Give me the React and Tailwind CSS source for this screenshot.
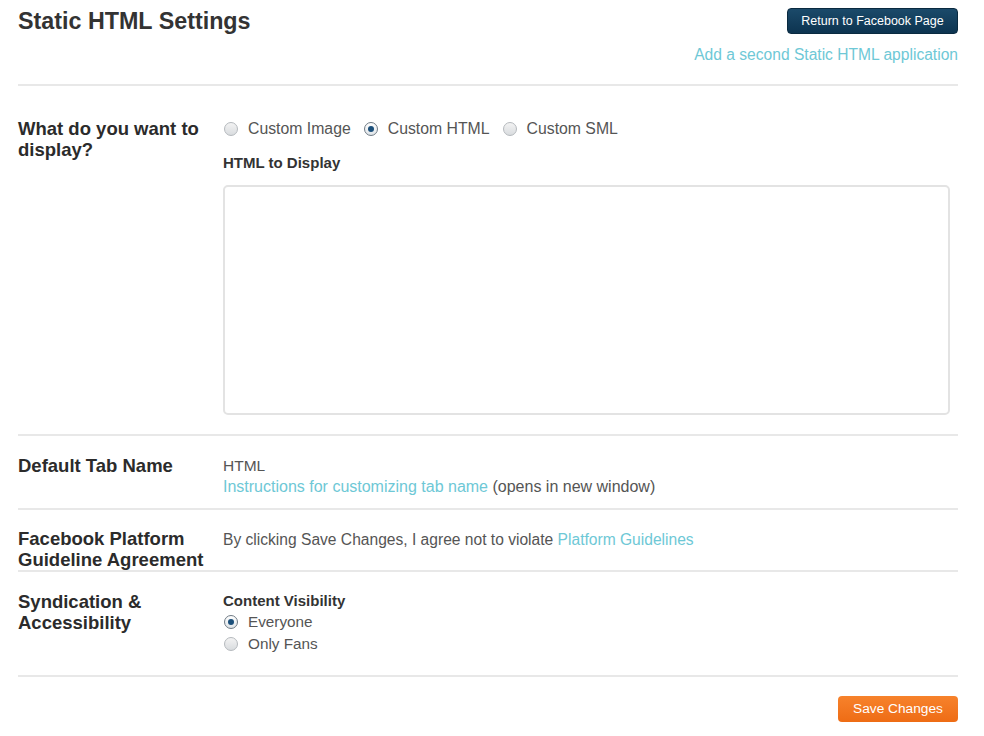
import { useState } from 'react';

const Radio = ({ checked, label, onClick }) => (
  <label onClick={onClick} className="inline-flex items-center gap-[10px] cursor-pointer">
    <span
      className={`ml-[1px] w-[14px] h-[14px] rounded-full border flex items-center justify-center ${
        checked ? 'border-[#6f7a84] bg-gradient-to-b from-white to-[#dfe4e8]' : 'border-[#b5b9bd] bg-gradient-to-b from-[#f3f3f3] to-[#d9dcdf]'
      }`}
    >
      {checked && <span className="w-[6px] h-[6px] rounded-full bg-[#1b4f7a]" />}
    </span>
    <span>{label}</span>
  </label>
);

const Row = ({ label, children, className = '' }) => (
  <div className={`flex border-t-2 border-[#e8e8e8] ${className}`}>
    <div className="w-[205px] shrink-0 text-[18.5px] font-bold leading-[21px] text-[#2b2b2b]">{label}</div>
    <div className="flex-1">{children}</div>
  </div>
);

export default function App() {
  const [display, setDisplay] = useState('html');
  const [visibility, setVisibility] = useState('everyone');

  return (
    <div className="w-[984px] h-[736px] bg-white text-[#444] text-[14px] font-[family-name:Liberation_Sans,Arial,sans-serif]">
      <div className="ml-[18px] w-[940px] pt-[8px]">
        {/* Header */}
        <div className="flex justify-between items-start">
          <h1 className="text-[23.3px] font-bold text-[#333] leading-[24px] mt-[1px]">Static HTML Settings</h1>
          <div className="flex flex-col items-end">
            <button className="h-[26px] w-[171px] rounded-[4px] bg-gradient-to-b from-[#1b4a6a] to-[#0d3450] border border-[#0a2a40] text-white text-[12.5px] leading-none">
              Return to Facebook Page
            </button>
            <a className="mt-[12px] text-[#6ec8d6] text-[15.6px] leading-[18px]">Add a second Static HTML application</a>
          </div>
        </div>

        {/* What to display */}
        <Row label={<>What do you want to<br />display?</>} className="mt-[20px] pt-[32px] pb-[19px]">
          <div className="mt-[2px] flex gap-[12px] text-[15.8px] leading-[18px] text-[#555]">
            <Radio checked={display === 'image'} label="Custom Image" onClick={() => setDisplay('image')} />
            <Radio checked={display === 'html'} label="Custom HTML" onClick={() => setDisplay('html')} />
            <Radio checked={display === 'sml'} label="Custom SML" onClick={() => setDisplay('sml')} />
          </div>
          <div className="mt-[16px] text-[15px] font-bold text-[#333] leading-[18px]">HTML to Display</div>
          <textarea className="block mt-[13px] w-[727px] h-[230px] border-2 border-[#e3e3e3] rounded-[5px] resize-none outline-none" />
        </Row>

        {/* Default tab name */}
        <Row label="Default Tab Name" className="pt-[19px] pb-[11px]">
          <div className="text-[15.5px] leading-[21px] text-[#555]">
            <div>HTML</div>
            <div className="text-[16px]">
              <a className="text-[#6ec8d6]">Instructions for customizing tab name</a> (opens in new window)
            </div>
          </div>
        </Row>

        {/* Platform agreement */}
        <Row label={<>Facebook Platform<br />Guideline Agreement</>} className="pt-[18px] pb-[0px]">
          <div className="mt-[1px] text-[15.6px] leading-[21px] text-[#555]">
            By clicking Save Changes, I agree not to violate <a className="text-[#6ec8d6]">Platform Guidelines</a>
          </div>
        </Row>

        {/* Syndication */}
        <Row label={<>Syndication &amp;<br />Accessibility</>} className="pt-[19px] pb-[20px]">
          <div className="-mt-[1px] text-[15.3px] leading-[22px] text-[#555]">
            <div className="text-[15px] font-bold text-[#333] leading-[21px]">Content Visibility</div>
            <div className="flex h-[22px] items-center">
              <Radio checked={visibility === 'everyone'} label="Everyone" onClick={() => setVisibility('everyone')} />
            </div>
            <div className="flex h-[22px] items-center">
              <Radio checked={visibility === 'fans'} label="Only Fans" onClick={() => setVisibility('fans')} />
            </div>
          </div>
        </Row>

        {/* Footer */}
        <div className="border-t-2 border-[#e8e8e8] flex justify-end pt-[19px]">
          <button className="h-[26px] w-[120px] rounded-[4px] bg-gradient-to-b from-[#f7822b] to-[#ee6c14] text-white text-[13.7px] leading-none">
            Save Changes
          </button>
        </div>
      </div>
    </div>
  );
}
